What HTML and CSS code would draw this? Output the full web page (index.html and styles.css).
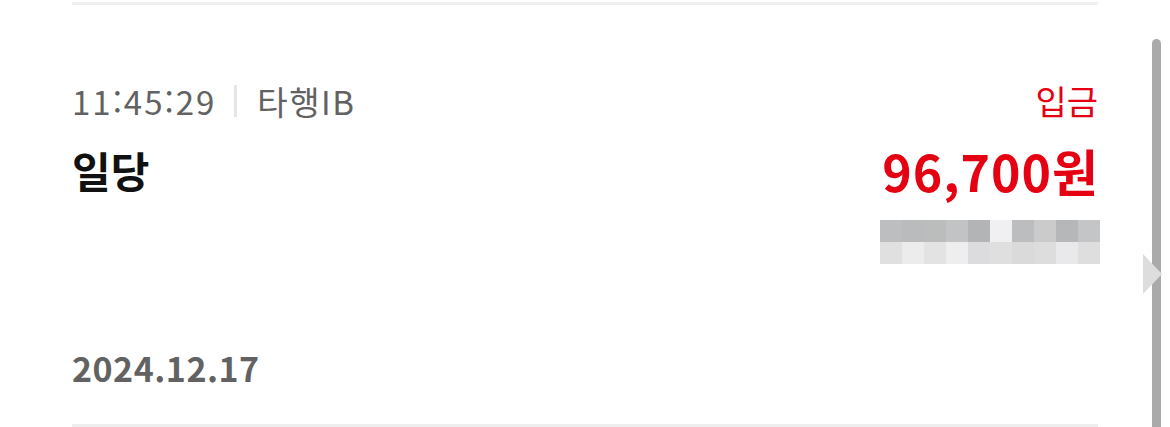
FILE: index.html
```html
<!DOCTYPE html>
<html lang="ko">
<head>
    <meta charset="UTF-8">
    <meta name="viewport" content="width=device-width, initial-scale=1.0">
    <title>거래내역</title>
    <link rel="stylesheet" href="styles.css">
</head>
<body>
    <div class="history">
        <div class="tx-item">
            <div class="tx-main">
                <div class="tx-left">
                    <div class="tx-meta">
                        <span class="tx-time">11:45:29</span>
                        <span class="tx-divider"></span>
                        <span class="tx-bank">타행IB</span>
                    </div>
                    <div class="tx-title">일당</div>
                </div>
                <div class="tx-right">
                    <div class="tx-type">입금</div>
                    <div class="tx-amount">96,700원</div>
                    <div class="tx-balance">
                        <span style="background:#bdbebf"></span><span style="background:#babbbd"></span><span style="background:#bbbdbc"></span><span style="background:#c2c3c5"></span><span style="background:#b3b4b6"></span><span style="background:#f0f0f2"></span><span style="background:#bcbdbe"></span><span style="background:#cbcbcb"></span><span style="background:#b6b7b9"></span><span style="background:#c4c5c7"></span>
                        <span style="background:#e0e0e1"></span><span style="background:#ececed"></span><span style="background:#e3e3e3"></span><span style="background:#eeeeef"></span><span style="background:#dcdcde"></span><span style="background:#dfdfdf"></span><span style="background:#dadadb"></span><span style="background:#dddddd"></span><span style="background:#e9e9eb"></span><span style="background:#dedede"></span>
                    </div>
                </div>
            </div>
            <div class="tx-date">2024.12.17</div>
        </div>
    </div>
    <div class="scrollbar"></div>
    <div class="scroll-arrow"></div>
</body>
</html>
```

FILE: styles.css
```css
body {
    margin: 0;
    background: #fff;
    font-family: 'Noto Sans CJK KR', 'Noto Sans', sans-serif;
    overflow: hidden;
}

.history {
    padding: 2px 0 0 72px;
    width: 1026px;
}

.tx-item {
    border-top: 3px solid #f0f0f0;
    border-bottom: 3px solid #eeeeee;
    padding: 76px 0 36px;
}

.tx-main {
    display: flex;
    justify-content: space-between;
    align-items: flex-start;
}

.tx-meta {
    display: flex;
    align-items: center;
    height: 40px;
    font-size: 33px;
    color: #626262;
}

.tx-time {
    letter-spacing: 2px;
}

.tx-bank {
    letter-spacing: 1.5px;
}

.tx-divider {
    width: 3px;
    height: 32px;
    background: #e6e6e6;
    margin: 0 20px 0 18px;
}

.tx-title {
    margin-top: 27px;
    line-height: 44px;
    font-size: 42px;
    font-weight: 700;
    color: #111;
}

.tx-right {
    display: flex;
    flex-direction: column;
    align-items: flex-end;
}

.tx-type {
    line-height: 40px;
    font-size: 34px;
    color: #e50012;
}

.tx-amount {
    margin-top: 22px;
    margin-right: -1px;
    line-height: 54px;
    font-size: 50px;
    font-weight: 700;
    letter-spacing: 1px;
    color: #e50012;
}

.tx-balance {
    margin-top: 23px;
    margin-right: -2px;
    display: grid;
    grid-template-columns: repeat(10, 22px);
    grid-auto-rows: 22px;
}

.tx-date {
    margin-top: 84px;
    line-height: 40px;
    font-size: 34px;
    font-weight: 700;
    letter-spacing: 0.5px;
    color: #626262;
}

.scrollbar {
    position: absolute;
    left: 1152px;
    top: 39px;
    width: 9px;
    height: 400px;
    background: #aaaaaa;
    border-radius: 5px 5px 0 0;
}

.scroll-arrow {
    position: absolute;
    left: 1143px;
    top: 254px;
    width: 0;
    height: 0;
    border-top: 20px solid transparent;
    border-bottom: 20px solid transparent;
    border-left: 19px solid #dddddd;
}
```
